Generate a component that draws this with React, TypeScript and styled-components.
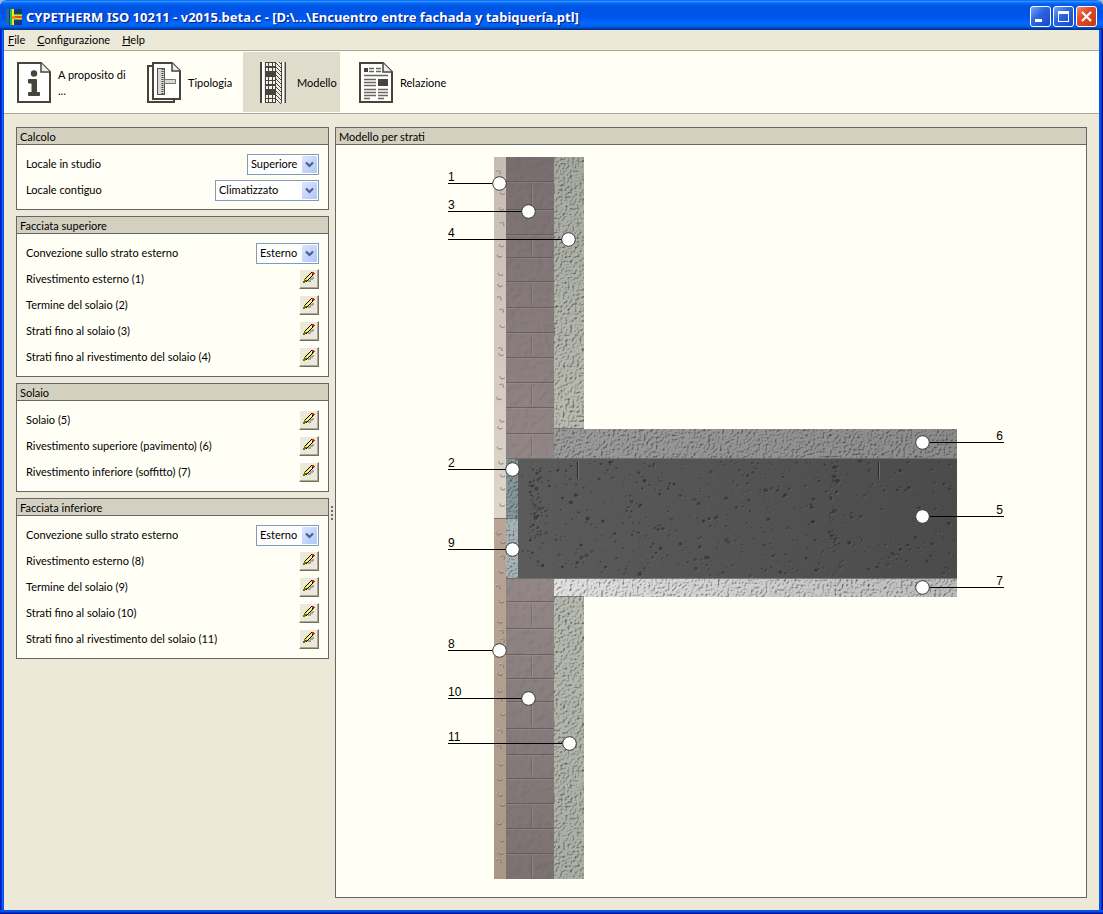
import React from "react";
import styled, { createGlobalStyle } from "styled-components";

const GlobalStyle = createGlobalStyle`
  * { box-sizing: border-box; }
  body { margin: 0; background: #9db4dc; }
  body, button, select { font-family: Lato, "Liberation Sans", Arial, sans-serif; font-size: 11px; line-height: 16px; color: #000; }
`;

const Window = styled.div`
  display: flex;
  flex-direction: column;
  min-height: 100vh;
  border-radius: 7px 7px 0 0;
  background: linear-gradient(90deg, #0019cf 0 1px, #0731d9 1px 2px, #1661ec 2px 3px, #0855dd 3px 4px, transparent 4px calc(100% - 4px), #0855dd calc(100% - 4px) calc(100% - 3px), #0b4fe5 calc(100% - 3px) calc(100% - 2px), #0731d9 calc(100% - 2px) calc(100% - 1px), #00138c calc(100% - 1px));
`;

const TitleBar = styled.header`
  display: flex;
  align-items: center;
  gap: 4px;
  height: 30px;
  padding: 3px 6px 0 6px;
  border-radius: 7px 7px 0 0;
  background: linear-gradient(#0058ee 0, #3593ff 4%, #288eff 6%, #127dff 8%, #036ffc 10%, #0262ee 14%, #0057e5 20%, #0054e3 24%, #0055eb 56%, #005bf5 66%, #026afe 76%, #0062ef 86%, #0052d6 92%, #0040ab 94%, #003092 100%);
`;

const Title = styled.h1`
  flex: 1;
  margin: 0;
  font-family: "Noto Sans", "Open Sans", sans-serif;
  font-size: 13px;
  font-weight: 700;
  line-height: 20px;
  white-space: nowrap;
  color: #fff;
  text-shadow: 1px 1px 1px #0a1883;
`;

const CaptionButtons = styled.div`
  display: flex;
  gap: 2px;
`;

const CaptionButton = styled.button<{ $close?: boolean }>`
  display: flex;
  width: 21px;
  height: 21px;
  padding: 0;
  border: 1px solid #fff;
  border-radius: 3px;
  background: ${(p) => (p.$close ? "linear-gradient(135deg, #ee8a6c, #e0492a 40%, #c8380c)" : "linear-gradient(135deg, #7ea6f4, #2d67e2 40%, #1648c8)")};
`;

const MenuBar = styled.nav`
  display: flex;
  gap: 12px;
  height: 21px;
  margin: 0 4px;
  padding: 2px 4px;
  border-bottom: 1px solid #aca899;
  background: #ece9d8;
`;

const MenuLink = styled.a`
  display: block;
  color: #000;
  text-decoration: none;
  &::first-letter { text-decoration: underline; }
`;

const Toolbar = styled.div`
  display: flex;
  gap: 6px;
  height: 63px;
  margin: 0 4px;
  padding: 1px 0;
  border-bottom: 1px solid #aca899;
  background: #fffff6;
`;

const ToolButton = styled.button<{ $active?: boolean }>`
  display: flex;
  align-items: center;
  gap: 7px;
  height: 60px;
  padding: 2px 6px 0 13px;
  border: 0;
  background: ${(p) => (p.$active ? "#e0dccc" : "transparent")};
  text-align: left;
  white-space: nowrap;
`;

const ToolLabel = styled.span<{ $width: number }>`
  width: ${(p) => p.$width}px;
`;

const Content = styled.main`
  display: flex;
  flex: 1;
  margin: 0 4px;
  padding: 13px 12px 12px;
  background: #ece9d8;
`;

const Sidebar = styled.div`
  display: flex;
  flex: 0 0 313px;
  flex-direction: column;
  gap: 6px;
`;

const Splitter = styled.div`
  display: flex;
  flex: 0 0 6px;
  flex-direction: column;
  align-items: center;
  justify-content: center;
  gap: 2px;
`;

const Grip = styled.i`
  width: 2px;
  height: 2px;
  background: #6a6a68;
`;

const Panel = styled.section<{ $grow?: boolean }>`
  display: flex;
  flex-direction: column;
  flex: ${(p) => (p.$grow ? "1" : "none")};
  min-width: 0;
  border: 1px solid #66666a;
  background: #fffff6;
`;

const PanelTitle = styled.h2`
  margin: 0;
  padding: 0 3px;
  height: 17px;
  line-height: 18px;
  font-size: 11px;
  font-weight: 400;
  border-bottom: 1px solid #66666a;
  background: #d4d0c0;
`;

const Rows = styled.div`
  padding: 6px 9px;
`;

const Row = styled.div`
  display: flex;
  align-items: center;
  justify-content: space-between;
  height: 26px;
`;

const SelectBox = styled.span<{ $width: number }>`
  position: relative;
  width: ${(p) => p.$width}px;
  height: 21px;
`;

const Select = styled.select`
  appearance: none;
  display: block;
  width: 100%;
  height: 21px;
  padding: 0 18px 0 3px;
  border: 1px solid #7f9db9;
  border-radius: 0;
  background: #fff;
`;

const SelectArrow = styled.svg`
  position: absolute;
  top: 2px;
  right: 2px;
  pointer-events: none;
`;

const EditButton = styled.button`
  width: 20px;
  height: 20px;
  padding: 0;
  border: 1px solid;
  border-color: #fff #716f64 #716f64 #fff;
  background: #ece9d8;
  box-shadow: inset -1px -1px 0 #aca899;
  svg { display: block; }
`;

const Drawing = styled.svg`
  display: block;
  flex: 1;
  width: 100%;
  min-height: 0;
  text { font-family: "Liberation Sans", Arial, sans-serif; font-size: 12px; }
`;

const BottomFrame = styled.footer`
  height: 4px;
  background: linear-gradient(#0855dd 0 1px, #0b4fe5 1px 2px, #0731d9 2px 3px, #00138c 3px);
`;

const PENCIL = [
  ".........KRR.",
  "........KYRRR",
  ".......KYWKR.",
  "......KYWYK..",
  ".....KYWYK...",
  "....KYWYK.gg.",
  "...KYWYKgggg.",
  "..OYYYK.ggg..",
  "..OOOKggg....",
  ".OOOK.ggg....",
  ".OO..........",
];
const PENCIL_COLORS: Record<string, string> = {
  R: "#d8201c", K: "#000", Y: "#f4ee3c", W: "#fffbb0", O: "#706c10", g: "#a3a3a3",
};

const PencilIcon = () => (
  <svg width="18" height="18" shapeRendering="crispEdges">
    {PENCIL.flatMap((line, y) =>
      [...line].map((c, x) =>
        c === "." ? null : <rect key={`${x}-${y}`} x={x + 2} y={y + 2} width="1" height="1" fill={PENCIL_COLORS[c]} />,
      ),
    )}
  </svg>
);

const AppIcon = () => (
  <svg width="16" height="16" viewBox="0 0 16 16">
    <rect width="16" height="16" fill="#173a78" />
    <path d="M0 0h3v16H0z" fill="#1d6ca8" />
    <path d="M4 0h2v16H4z" fill="#24c04c" />
    <path d="M6 0h2v16H6z" fill="#f4e820" />
    <path d="M8 5h8v6H8z" fill="#3fc048" />
    <path d="M7 6h9v4H7z" fill="#f4d020" />
    <path d="M9 7h7v2H9z" fill="#f04818" />
    <path d="M6 7h3v3H6z" fill="#f09018" />
  </svg>
);

const INK = "#47453b";

const InfoIcon = () => (
  <svg width="34" height="42" viewBox="0 0 34 42">
    <path d="M1 1h23l9 9v30H1z" fill="#fff" stroke={INK} strokeWidth="2" />
    <path d="M24 1v9h9" fill="#eee" stroke={INK} strokeWidth="1.5" />
    <circle cx="17" cy="11.5" r="3.2" fill={INK} />
    <path d="M11.500 17.500h8v13h3v3h-11v-3h3.500v-9.500h-3.500z" fill={INK} stroke={INK} strokeLinejoin="round" />
  </svg>
);

const TypologyIcon = () => (
  <svg width="34" height="42" viewBox="0 0 34 42">
    <path d="M5 4H1v36h26v-3" fill="#fff" stroke={INK} strokeWidth="2" />
    <path d="M6 1h19l8 8v28H6z" fill="#fff" stroke={INK} strokeWidth="2" />
    <path d="M25 1v8h8" fill="#eee" stroke={INK} strokeWidth="1.5" />
    <rect x="10.5" y="6.5" width="7" height="26" fill="#d8d8d8" stroke="#55534a" />
    <path d="M15.5 7v25" stroke={INK} strokeWidth="2" strokeDasharray="1 1" />
    <path d="M17.5 17.5h11v4h-11z" fill="#d8d8d8" stroke="#77756c" />
  </svg>
);

const ModelIcon = () => (
  <svg width="34" height="42" viewBox="0 0 34 42">
    <path d="M4 0h26v41H4z" fill="#eeece2" />
    <path d="M5 0v41M29 0v41" stroke={INK} strokeWidth="2" />
    <path d="M9 0h11v41H9z" fill={INK} />
    <path d="M7 0v41M27.5 0v41" stroke="#fff" strokeWidth="2" />
    {[1, 6, 15, 19, 24, 33, 37].map((y) => (
      <path key={y} d={`M10 ${y}h2v3h-2zM13 ${y}h3v3h-3zM17 ${y}h2v3h-2z`} fill="#f4f2ea" />
    ))}
    <path d="M20 0h5v41h-5z" fill="#f0eee6" />
    {[-3, 1, 5, 9, 13, 17, 21, 25, 29, 33, 37].map((y) => (
      <path key={y} d={`M20 ${y}l5 5`} stroke={INK} />
    ))}
    <path d="M25.5 0v41" stroke={INK} />
  </svg>
);

const ReportIcon = () => (
  <svg width="34" height="42" viewBox="0 0 34 42">
    <path d="M1 1h23l9 9v30H1z" fill="#fff" stroke={INK} strokeWidth="2" />
    <path d="M24 1v9h9" fill="#eee" stroke={INK} strokeWidth="1.5" />
    <path d="M5 6h4v4H5zM19 17h10v7H19z" fill={INK} />
    <path
      d="M10 6.5h5M10 9.5h5M17 6.5h5M17 9.5h5M5 13.5h24M5 17.5h12M5 20.5h12M5 23.5h12M5 27.5h12M19 27.5h10M5 30.5h12M19 30.5h10M5 33.5h12M19 33.5h10M5 36.5h6M19 36.5h6"
      stroke="#67655c" strokeWidth="1.5"
    />
  </svg>
);

type DropProps = { label: string; value: string; width: number; id: string };

const DropRow = ({ label, value, width, id }: DropProps) => (
  <Row>
    <label htmlFor={id}>{label}</label>
    <SelectBox $width={width}>
      <Select id={id} defaultValue={value}>
        <option>{value}</option>
      </Select>
      <SelectArrow width="15" height="17" viewBox="0 0 15 17">
        <defs>
          <linearGradient id={`${id}-face`} x2="1" y2="1">
            <stop stopColor="#dce6fe" />
            <stop offset="1" stopColor="#afc6f8" />
          </linearGradient>
        </defs>
        <rect width="15" height="17" rx="1" fill={`url(#${id}-face)`} />
        <path d="M4 6.5l3.5 3.5l3.5-3.5" fill="none" stroke="#4d6185" strokeWidth="2.2" />
      </SelectArrow>
    </SelectBox>
  </Row>
);

const EditRow = ({ label }: { label: string }) => (
  <Row>
    <span>{label}</span>
    <EditButton aria-label={label}>
      <PencilIcon />
    </EditButton>
  </Row>
);

const random = (seed: number) => () => {
  seed = (seed * 16807) % 2147483647;
  return seed / 2147483647;
};

type Area = { x: number; y: number; w: number; h: number };

// Scattered pores of cast concrete
const Pores = ({ x, y, w, h, count, seed }: Area & { count: number; seed: number }) => {
  const next = random(seed);
  return (
    <g>
      {Array.from({ length: count }, (_, i) => {
        const cx = x + 2 + next() * (w - 4);
        const cy = y + 2 + next() * (h - 4);
        const r = 0.5 + next() * next() * 2;
        return (
          <g key={i}>
            <ellipse cx={cx + 0.7} cy={cy + 0.7} rx={r} ry={r * 0.9} fill="#747474" opacity="0.5" />
            <ellipse cx={cx} cy={cy} rx={r} ry={r * 0.9} fill="#2c2c2c" opacity={0.4 + next() * 0.4} />
          </g>
        );
      })}
    </g>
  );
};

// Small curved dents of the outer render coat
const Dents = ({ x, y, w, h, count, seed }: Area & { count: number; seed: number }) => {
  const next = random(seed);
  return (
    <g fill="none">
      {Array.from({ length: count }, (_, i) => {
        const cx = x + 2 + next() * (w - 7);
        const cy = y + 4 + ((i + next() * 0.8) * (h - 10)) / count;
        const d = next() > 0.5 ? `M${cx} ${cy}q4 -2 4 3` : `M${cx} ${cy}q1 4 5 2`;
        return (
          <g key={i}>
            <path d={d} stroke="#6b5a4c" strokeOpacity="0.5" strokeWidth="1.6" />
            <path d={d} transform="translate(-1 -1)" stroke="#fff" strokeOpacity="0.3" />
          </g>
        );
      })}
    </g>
  );
};

const UPPER_COURSES = [157, 181, 209, 234, 257, 281, 307, 332, 357, 382, 407, 433, 458];
const LOWER_COURSES = [578, 601, 628, 654, 678, 701, 728, 754, 778, 803, 828, 853, 879];

const Mortar = ({ courses }: { courses: number[] }) => (
  <g>
    {courses.slice(1, -1).map((y, i) => (
      <g key={y}>
        <path d={`M506 ${y + 0.5}h48`} stroke="#554b4c" strokeOpacity="0.6" />
        <path d={`M506 ${y + 1.5}h48`} stroke="#aaa0a0" strokeOpacity="0.3" />
        {i % 2 === 0 && (
          <>
            <path d={`M531.5 ${y + 4}V${courses[i + 2] - 2}`} stroke="#554b4c" strokeOpacity="0.4" />
            <path d={`M532.5 ${y + 4}V${courses[i + 2] - 2}`} stroke="#b5abab" strokeOpacity="0.3" />
          </>
        )}
      </g>
    ))}
  </g>
);

const MARKERS = [
  { n: 1, x: 499, y: 183 },
  { n: 3, x: 528, y: 211 },
  { n: 4, x: 568, y: 239 },
  { n: 2, x: 512, y: 469 },
  { n: 9, x: 512, y: 549 },
  { n: 8, x: 499, y: 650 },
  { n: 10, x: 528, y: 698 },
  { n: 11, x: 569, y: 743 },
  { n: 6, x: 922, y: 442, right: true },
  { n: 5, x: 922, y: 516, right: true },
  { n: 7, x: 922, y: 587, right: true },
];

const GRADIENTS: [string, string, string, boolean][] = [
  ["coatTop", "#c6bbb0", "#ded5cb", true],
  ["coatBottom", "#b9a595", "#a99888", true],
  ["brickTop", "#796e6f", "#938687", true],
  ["brickBottom", "#938788", "#7c7272", true],
  ["plasterTop", "#a6aaa1", "#babcb2", true],
  ["plasterBottom", "#b7bab0", "#abb0a6", true],
  ["floor", "#9c9c9c", "#8c8c8c", false],
  ["slab", "#5b5b5b", "#4b4b4b", false],
  ["ceiling", "#e2e2e2", "#bcbcbc", false],
];

const LayerModel = () => (
  <Drawing viewBox="336 145 750 752" preserveAspectRatio="xMidYMid meet" role="img" aria-label="Modello per strati">
    <defs>
      {GRADIENTS.map(([id, from, to, vertical]) => (
        <linearGradient key={id} id={id} x2={vertical ? 0 : 1} y2={vertical ? 1 : 0}>
          <stop stopColor={from} />
          <stop offset="1" stopColor={to} />
        </linearGradient>
      ))}
      {[
        { id: "rough", freq: 0.42, scale: 1.4 },
        { id: "fine", freq: 0.15, scale: 0.3 },
      ].map(({ id, freq, scale }) => (
        <filter key={id} id={id} x="0" y="0" width="1" height="1" colorInterpolationFilters="sRGB">
          <feTurbulence type="fractalNoise" baseFrequency={freq} numOctaves="2" seed="4" />
          <feDiffuseLighting surfaceScale={scale} diffuseConstant="1.2" lightingColor="#fff" result="light">
            <feDistantLight azimuth="225" elevation="56" />
          </feDiffuseLighting>
          <feComposite in="SourceGraphic" in2="light" operator="arithmetic" k1="1" k2="0" k3="0" k4="0" />
        </filter>
      ))}
    </defs>

    <rect x="494" y="157" width="12" height="361" fill="url(#coatTop)" />
    <rect x="494" y="518" width="12" height="361" fill="url(#coatBottom)" />
    <Dents x={494} y={157} w={12} h={361} count={24} seed={37} />
    <Dents x={494} y={518} w={12} h={361} count={24} seed={911} />

    <g filter="url(#fine)">
      <rect x="506" y="157" width="48" height="302" fill="url(#brickTop)" />
      <rect x="506" y="578" width="48" height="301" fill="url(#brickBottom)" />
    </g>
    <Mortar courses={UPPER_COURSES} />
    <Mortar courses={LOWER_COURSES} />

    <g filter="url(#rough)">
      <rect x="554" y="157" width="30" height="272" fill="url(#plasterTop)" />
      <rect x="554" y="597" width="30" height="282" fill="url(#plasterBottom)" />
      <rect x="554" y="429" width="403" height="30" fill="url(#floor)" />
      <rect x="554" y="578" width="403" height="19" fill="url(#ceiling)" />
      <rect x="506" y="459" width="12" height="59" fill="#879699" />
      <rect x="506" y="518" width="12" height="60" fill="#a8b5b8" />
    </g>

    <rect x="518" y="459" width="439" height="119" fill="url(#slab)" />
    <Pores x={518} y={459} w={439} h={119} count={700} seed={77} />
    <Pores x={528} y={464} w={16} h={80} count={70} seed={523} />
    <Pores x={828} y={464} w={12} h={90} count={70} seed={1289} />
    <path d="M577.5 462v17M878.5 462v17" stroke="#2b2b2b" />
    <path d="M578.5 462v17M879.5 462v17" stroke="#858585" strokeOpacity="0.6" />
    <path d="M506 458.5h451M494 518.5h24M506 578.5h451M554 428.5h30M554 596.5h30" stroke="#666" strokeOpacity="0.8" />

    {MARKERS.map(({ n, x, y, right }) => (
      <g key={n}>
        <path d={right ? `M${x} ${y + 0.5}H1004` : `M448 ${y + 0.5}H${x}`} stroke="#000" />
        <circle cx={x + 0.5} cy={y + 0.5} r="6.8" fill="#fff" stroke="#3c3c3c" />
        <text x={right ? 1003 : 448} y={y - 2} textAnchor={right ? "end" : "start"}>{n}</text>
      </g>
    ))}
  </Drawing>
);

export default function App() {
  return (
    <Window>
      <GlobalStyle />
      <TitleBar>
        <AppIcon />
        <Title>{"CYPETHERM ISO 10211 - v2015.beta.c - [D:\\...\\Encuentro entre fachada y tabiquería.ptl]"}</Title>
        <CaptionButtons>
          <CaptionButton aria-label="Minimize">
            <svg width="19" height="19"><path d="M4 12h7v3H4z" fill="#fff" /></svg>
          </CaptionButton>
          <CaptionButton aria-label="Maximize">
            <svg width="19" height="19"><path d="M4 4h11v11H4zM5 7v7h9V7z" fill="#fff" fillRule="evenodd" /></svg>
          </CaptionButton>
          <CaptionButton $close aria-label="Close">
            <svg width="19" height="19"><path d="M5 5l9 9M14 5l-9 9" stroke="#fff" strokeWidth="2.2" /></svg>
          </CaptionButton>
        </CaptionButtons>
      </TitleBar>
      <MenuBar>
        <MenuLink href="#file">File</MenuLink>
        <MenuLink href="#configurazione">Configurazione</MenuLink>
        <MenuLink href="#help">Help</MenuLink>
      </MenuBar>
      <Toolbar>
        <ToolButton><InfoIcon /><ToolLabel $width={64}>A proposito di<br />...</ToolLabel></ToolButton>
        <ToolButton><TypologyIcon /><ToolLabel $width={43}>Tipologia</ToolLabel></ToolButton>
        <ToolButton $active><ModelIcon /><ToolLabel $width={37}>Modello</ToolLabel></ToolButton>
        <ToolButton><ReportIcon /><ToolLabel $width={48}>Relazione</ToolLabel></ToolButton>
      </Toolbar>
      <Content>
        <Sidebar>
          <Panel>
            <PanelTitle>Calcolo</PanelTitle>
            <Rows>
              <DropRow id="studio" label="Locale in studio" value="Superiore" width={72} />
              <DropRow id="contiguo" label="Locale contiguo" value="Climatizzato" width={104} />
            </Rows>
          </Panel>
          <Panel>
            <PanelTitle>Facciata superiore</PanelTitle>
            <Rows>
              <DropRow id="convezione-sup" label="Convezione sullo strato esterno" value="Esterno" width={63} />
              <EditRow label="Rivestimento esterno (1)" />
              <EditRow label="Termine del solaio (2)" />
              <EditRow label="Strati fino al solaio (3)" />
              <EditRow label="Strati fino al rivestimento del solaio (4)" />
            </Rows>
          </Panel>
          <Panel>
            <PanelTitle>Solaio</PanelTitle>
            <Rows>
              <EditRow label="Solaio (5)" />
              <EditRow label="Rivestimento superiore (pavimento) (6)" />
              <EditRow label="Rivestimento inferiore (soffitto) (7)" />
            </Rows>
          </Panel>
          <Panel>
            <PanelTitle>Facciata inferiore</PanelTitle>
            <Rows>
              <DropRow id="convezione-inf" label="Convezione sullo strato esterno" value="Esterno" width={63} />
              <EditRow label="Rivestimento esterno (8)" />
              <EditRow label="Termine del solaio (9)" />
              <EditRow label="Strati fino al solaio (10)" />
              <EditRow label="Strati fino al rivestimento del solaio (11)" />
            </Rows>
          </Panel>
        </Sidebar>
        <Splitter><Grip /><Grip /><Grip /><Grip /></Splitter>
        <Panel $grow>
          <PanelTitle>Modello per strati</PanelTitle>
          <LayerModel />
        </Panel>
      </Content>
      <BottomFrame />
    </Window>
  );
}
